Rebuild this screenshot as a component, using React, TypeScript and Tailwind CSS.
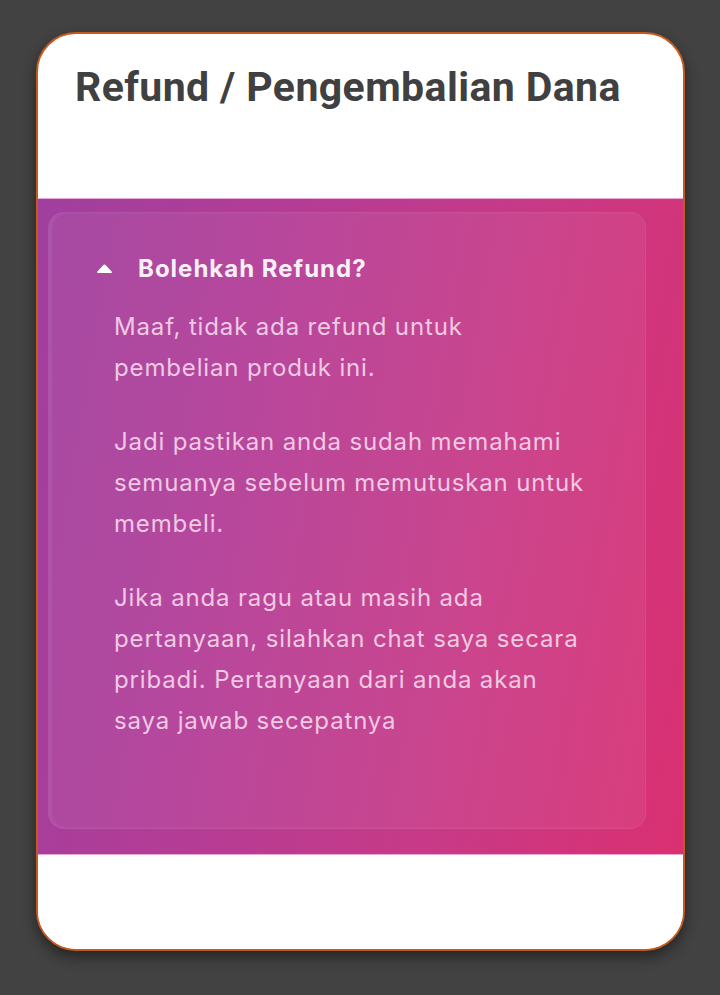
import React from "react";

function CaretUp() {
  return (
    <svg width="17" height="10" viewBox="0 0 17 10" className="shrink-0">
      <path
        d="M7.2 1.2 Q8.5 -0.2 9.8 1.2 L15.6 7.4 Q16.6 8.8 15 9 L2 9 Q0.4 8.8 1.4 7.4 Z"
        fill="#ffffff"
      />
    </svg>
  );
}

export default function App() {
  return (
    <div className="min-h-[995px] w-full bg-[#424242] pl-[36px] pr-[35px] pt-[32px]">
      <div className="flex h-[919px] w-[649px] flex-col overflow-hidden rounded-[40px] border-2 border-[#c55a1e] bg-white shadow-[0_6px_14px_rgba(0,0,0,0.45)]">
        <div className="h-[164px] shrink-0 px-[37px] pt-[25px]">
          <h1 className="whitespace-nowrap font-['Roboto',sans-serif] text-[41px] font-bold leading-[56px] tracking-[0.4px] text-[#404040]">
            Refund / Pengembalian Dana
          </h1>
        </div>

        <div className="h-[657px] shrink-0 border-y border-[#e9a9d6] bg-[linear-gradient(100deg,#a03f9f_0%,#b53c95_35%,#c73a87_65%,#da3072_100%)] pb-[25px] pl-[10px] pr-[37px] pt-[13px]">
          <div className="h-full rounded-[16px] border border-white/[0.06] bg-white/[0.06] pl-[47px] pr-[20px] pt-[42px] shadow-[inset_3px_0_3px_rgba(255,255,255,0.07)]">
            <div className="flex items-center gap-[25px]">
              <CaretUp />
              <span className="font-['Inter',sans-serif] text-[24px] font-bold leading-[28px] tracking-[1px] text-[#f8f0f7]">
                Bolehkah Refund?
              </span>
            </div>
            <div className="mt-[23px] space-y-[33px] whitespace-nowrap pl-[18px] font-['Inter',sans-serif] text-[24px] font-normal leading-[41px] tracking-[0.85px] text-[#efc9e3]">
              <p>
                Maaf, tidak ada refund untuk
                <br />
                pembelian produk ini.
              </p>
              <p>
                Jadi pastikan anda sudah memahami
                <br />
                semuanya sebelum memutuskan untuk
                <br />
                membeli.
              </p>
              <p>
                Jika anda ragu atau masih ada
                <br />
                pertanyaan, silahkan chat saya secara
                <br />
                pribadi. Pertanyaan dari anda akan
                <br />
                saya jawab secepatnya
              </p>
            </div>
          </div>
        </div>

        <div className="flex-1 bg-white" />
      </div>
    </div>
  );
}
